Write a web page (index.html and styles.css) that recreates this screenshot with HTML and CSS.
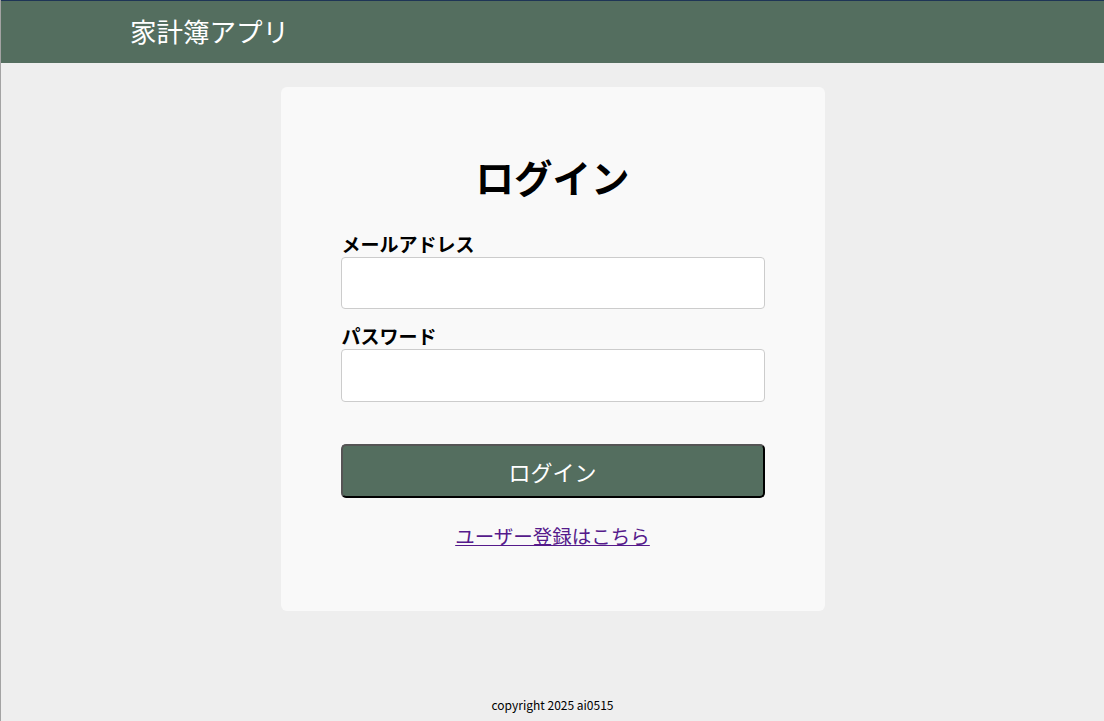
FILE: index.html
```html
<!DOCTYPE html>
<html lang="ja">
<head>
<meta charset="utf-8">
<title>家計簿アプリ</title>
<link rel="stylesheet" href="styles.css">
</head>
<body>
<div class="page">
  <header class="site-header">
    <div class="brand">家計簿アプリ</div>
  </header>
  <main class="main">
    <section class="card">
      <h1 class="title">ログイン</h1>
      <form class="form">
        <label class="label" for="email">メールアドレス</label>
        <input class="input" id="email" type="email">
        <label class="label label-second" for="password">パスワード</label>
        <input class="input input-second" id="password" type="password">
        <button class="btn" type="button">ログイン</button>
      </form>
      <p class="register"><a class="register-link" href="#">ユーザー登録はこちら</a></p>
    </section>
  </main>
  <footer class="footer">copyright 2025 ai0515</footer>
</div>
</body>
</html>
```

FILE: styles.css
```css
* { box-sizing: border-box; }
html, body { margin: 0; padding: 0; height: 100%; }
body {
  background: #eeeeee;
  font-family: "Noto Sans CJK JP", "Noto Sans", sans-serif;
  color: #000;
}
.page {
  min-height: 721px;
  height: 721px;
  display: flex;
  flex-direction: column;
  border-left: 1px solid #a3a3a3;
}
.site-header {
  background: #546e5f;
  border-top: 1px solid #1e3556;
  height: 63px;
  display: flex;
  align-items: center;
  padding-left: 129px;
}
.brand {
  color: #fff;
  font-size: 26.5px;
  line-height: 1;
  padding-bottom: 2px;
}
.main {
  flex: 1;
  display: flex;
  justify-content: center;
  padding-top: 24px;
}
.card {
  width: 544px;
  height: 524px;
  background: #f9f9f9;
  border-radius: 6px;
  padding: 62px 60px 0 60px;
  display: flex;
  flex-direction: column;
}
.title {
  margin: 0;
  text-align: center;
  font-size: 38.5px;
  font-weight: 700;
  line-height: 54px;
}
.form {
  display: flex;
  flex-direction: column;
  margin-top: 27px;
}
.label {
  font-size: 19px;
  font-weight: 700;
  line-height: 27px;
  padding-left: 1px;
}
.label-second { margin-top: 13px; }
.input {
  height: 52px;
  border: 1px solid #cccccc;
  border-radius: 4px;
  background: #fff;
  font-size: 16px;
  padding: 0 10px;
}
.input-second { height: 53px; }
.btn {
  margin-top: 42px;
  height: 54px;
  background: #546e5f;
  color: #fff;
  font-family: inherit;
  font-size: 22px;
  border-radius: 5px;
  border-width: 2px;
  border-style: solid;
  border-color: #555555 #000000 #000000 #555555;
  cursor: pointer;
}
.register {
  margin: 23px 0 0 0;
  text-align: center;
  font-size: 19.5px;
  line-height: 30px;
}
.register-link {
  color: #551a8b;
  text-decoration: underline;
}
.footer {
  text-align: center;
  font-size: 12px;
  line-height: 18px;
  padding-bottom: 7px;
  font-family: "Noto Sans CJK JP", sans-serif;
}
```
